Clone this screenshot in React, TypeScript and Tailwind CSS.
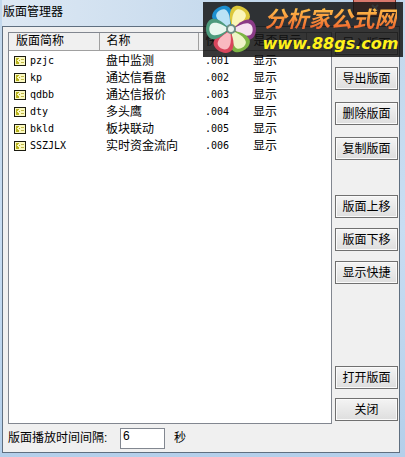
const layouts = [
  { code: 'pzjc', name: '盘中监测', hotkey: '.001' },
  { code: 'kp', name: '通达信看盘', hotkey: '.002' },
  { code: 'qdbb', name: '通达信报价', hotkey: '.003' },
  { code: 'dty', name: '多头鹰', hotkey: '.004' },
  { code: 'bkld', name: '板块联动', hotkey: '.005' },
  { code: 'SSZJLX', name: '实时资金流向', hotkey: '.006' },
]

const columns = ['版面简称', '名称', '快捷键', '是否显示']

const petals = [
  { angle: -32, color: '#1d8fd0', inner: '#b9e2f5' },
  { angle: 32, color: '#dcc83a', inner: '#fbf6b8' },
  { angle: 92, color: '#8a3a86', inner: '#f6e2f0' },
  { angle: 148, color: '#7db544', inner: '#eef5c8' },
  { angle: 206, color: '#d8465c', inner: '#f9b9c0' },
  { angle: 270, color: '#4d9a7c', inner: '#e8f6ee' },
]

function LayoutIcon() {
  return (
    <svg width="12" height="10" viewBox="0 0 12 10" className="shrink-0" shapeRendering="crispEdges" aria-hidden="true">
      <rect width="12" height="10" fill="#1c1c10" />
      <rect x="1" y="1" width="10" height="8" fill="#fbf9c0" />
      <path d="M2 2h3v1H4v1H3v1h1v1h1v2H2zM5 4h1v1H5z" fill="#b8b21c" />
      <path d="M7 3h3v1H7zM7 6h3v1H7z" fill="#c0b84a" />
    </svg>
  )
}

function Flower() {
  return (
    <svg width="54" height="52" viewBox="-27 -25 54 52" className="shrink-0" aria-hidden="true">
      {petals.map(({ angle, color, inner }) => (
        <g key={angle} transform={`rotate(${angle})`}>
          <path d="M0 -2C-6 -7 -11 -13 -10 -19C-8 -27 8 -27 10 -19C11 -13 6 -7 0 -2Z" fill={color} />
          <path d="M0 -2C-4 -8 -7 -13 -6 -18C-5 -23 5 -23 6 -18C7 -13 4 -8 0 -2Z" fill={inner} />
        </g>
      ))}
      <circle r="5" fill="#6d8f86" />
      <circle r="3" fill="#eaf3ee" />
    </svg>
  )
}

function ToolButton({ label }: { label: string }) {
  return (
    <button
      type="button"
      className="h-[23px] w-full shrink-0 whitespace-nowrap border border-[#707070] bg-linear-to-b from-[#f4f4f4] to-[#dedede] text-xs leading-4 shadow-[inset_0_0_0_1px_#fafafa]"
    >
      {label}
    </button>
  )
}

function Watermark() {
  return (
    <div className="pointer-events-none absolute top-[2px] right-[2px] flex h-[55px] w-[200px] items-center bg-[#141414]/85 pl-px">
      <Flower />
      <div className="flex flex-1 flex-col items-center whitespace-nowrap pt-1 font-bold italic">
        <span className="bg-linear-to-b from-[#ffc04a] to-[#e8542a] bg-clip-text text-[22px] leading-6 text-transparent">
          分析家公式网
        </span>
        <span className="font-['DejaVu_Sans'] text-base leading-6 text-[#fff21a]">www.88gs.com</span>
      </div>
    </div>
  )
}

export default function App() {
  return (
    <div className="relative flex h-screen min-h-[457px] flex-col bg-linear-to-b from-[#c3d8ec] via-[#c8ddf2] to-[#b4cfea] pr-[5px] pb-1 pl-[2px] font-['Liberation_Sans','Noto_Sans_CJK_SC',sans-serif] text-xs text-black">
      <header className="flex h-[26px] shrink-0 items-start justify-between bg-linear-to-r from-[#dde8f3] to-[#b3cee8] pr-1 pl-px">
        <h1 className="pt-1 text-xs leading-4">版面管理器</h1>
        <button
          type="button"
          aria-label="关闭窗口"
          className="flex h-[17px] w-[43px] items-center justify-center rounded-b-sm border border-t-0 border-[#6b2a26] bg-[#d9786c]"
        >
          <svg width="8" height="8" viewBox="0 0 8 8" aria-hidden="true">
            <path d="M1 1l6 6M7 1L1 7" stroke="#ffffff" strokeWidth="2" />
          </svg>
        </button>
      </header>

      <main className="flex flex-1 flex-col border border-[#5f6f80] bg-[#f0f0f0] pt-[5px] pl-[5px]">
        <div className="flex flex-1">
          <div className="flex-1 border border-[#828790] bg-white">
            <table className="w-full table-fixed border-collapse text-left">
              <colgroup>
                <col className="w-[90px]" />
                <col className="w-[99px]" />
                <col className="w-12" />
                <col className="w-[60px]" />
                <col />
              </colgroup>
              <thead>
                <tr className="h-[17px] bg-[#f0f0f0]">
                  {columns.map((column) => (
                    <th
                      key={column}
                      className="h-[17px] whitespace-nowrap border-r border-b border-[#a0a0a0] p-0 pl-[7px] font-normal leading-4"
                    >
                      {column}
                    </th>
                  ))}
                  <td className="border-b border-[#a0a0a0] p-0" />
                </tr>
              </thead>
              <tbody>
                <tr className="h-[2px]" />
                {layouts.map(({ code, name, hotkey }) => (
                  <tr key={code} className="h-[17px]">
                    <td className="p-0 pl-[5px]">
                      <span className="flex items-center gap-1">
                        <LayoutIcon />
                        <span className="font-['DejaVu_Sans_Mono'] text-[10px] leading-4">{code}</span>
                      </span>
                    </td>
                    <td className="p-0 pl-[7px] leading-4">{name}</td>
                    <td className="p-0 pl-[7px] font-['DejaVu_Sans_Mono'] text-[10px] leading-4">{hotkey}</td>
                    <td className="p-0 pl-[7px] leading-4">显示</td>
                    <td className="p-0" />
                  </tr>
                ))}
              </tbody>
            </table>
          </div>

          <aside className="flex w-[67px] shrink-0 flex-col justify-between pr-px pb-[3px] pl-[3px]">
            <div className="flex flex-col gap-[35px]">
              <div className="flex flex-col gap-3">
                <ToolButton label="导入版面" />
                <ToolButton label="导出版面" />
                <ToolButton label="删除版面" />
                <ToolButton label="复制版面" />
              </div>
              <div className="flex flex-col gap-[10px]">
                <ToolButton label="版面上移" />
                <ToolButton label="版面下移" />
                <ToolButton label="显示快捷" />
              </div>
            </div>
            <div className="flex flex-col gap-[9px]">
              <ToolButton label="打开版面" />
              <ToolButton label="关闭" />
            </div>
          </aside>
        </div>

        <div className="flex h-7 shrink-0 items-center">
          <label htmlFor="interval" className="w-28 leading-4">
            版面播放时间间隔:
          </label>
          <input
            id="interval"
            type="text"
            defaultValue="6"
            className="h-[21px] w-[45px] border border-[#828790] bg-white px-[2px] pb-1 text-xs leading-4"
          />
          <span className="pl-[9px] leading-4">秒</span>
        </div>
      </main>

      <Watermark />
    </div>
  )
}
